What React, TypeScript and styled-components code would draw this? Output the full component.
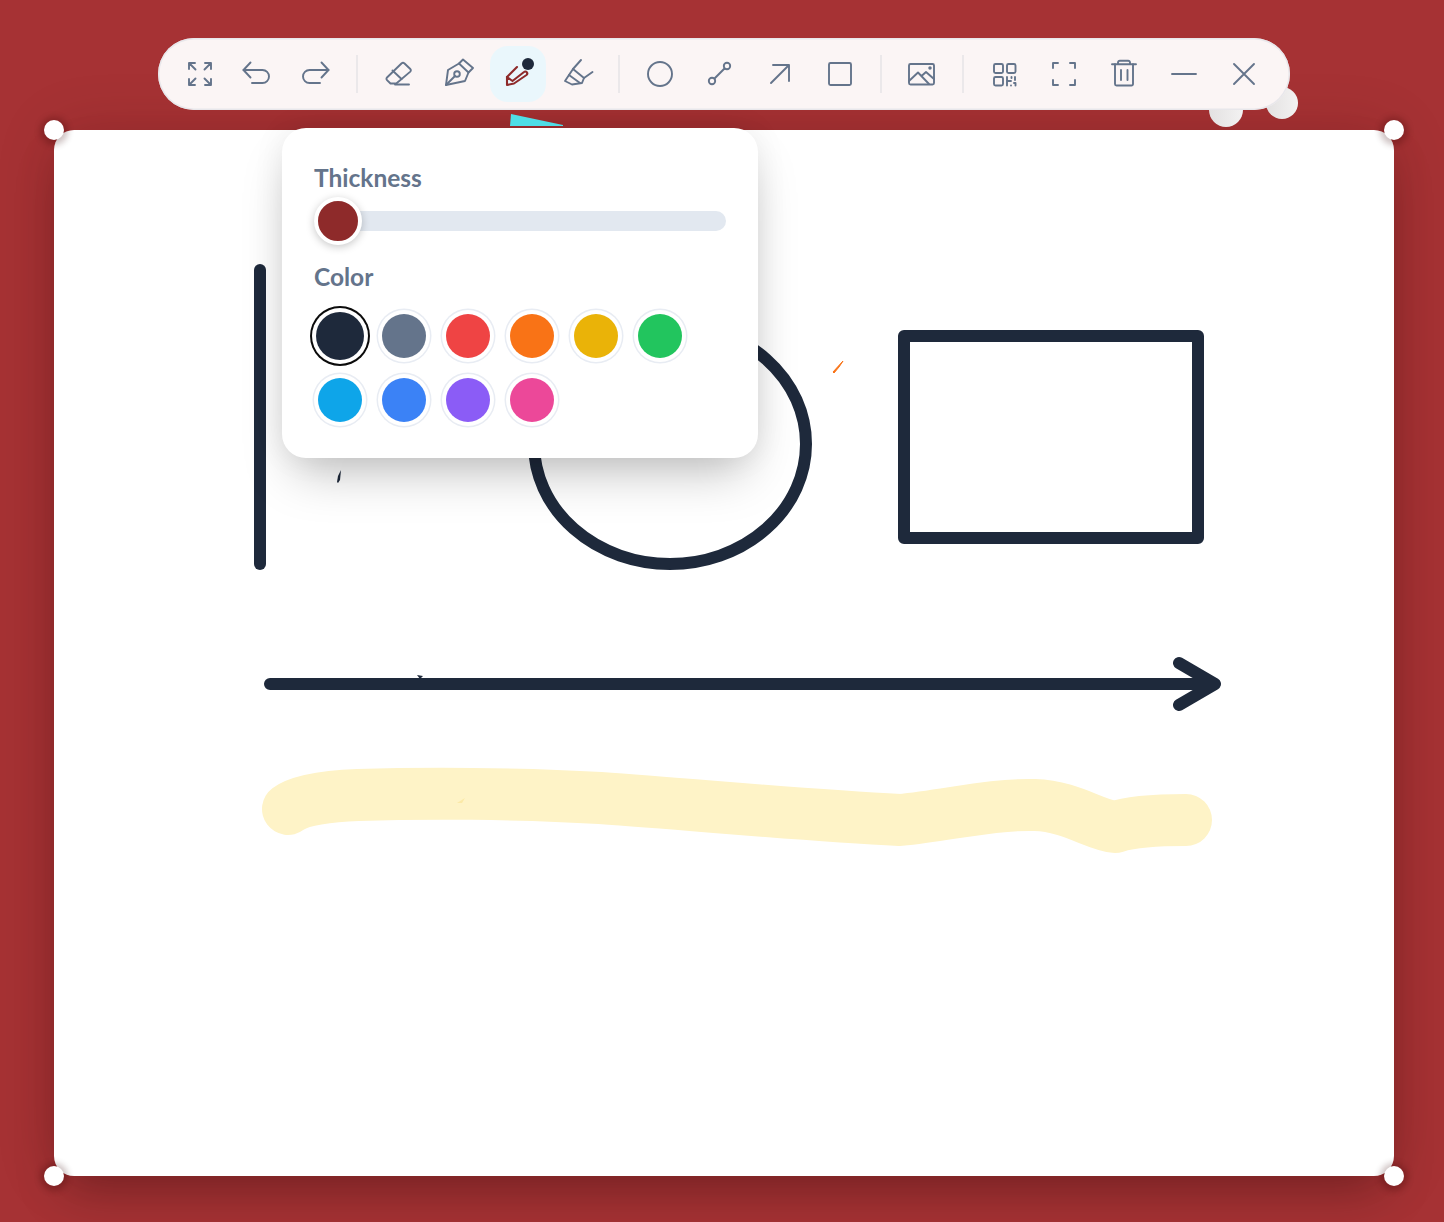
import React from 'react';
import styled, { createGlobalStyle } from 'styled-components';

const GlobalStyle = createGlobalStyle`
  html,
  body {
    margin: 0;
    padding: 0;
    background: #a63234;
    font-family: Lato, 'Open Sans', sans-serif;
  }
`;

const Page = styled.div`
  width: 1444px;
  height: 1222px;
  box-sizing: border-box;
  padding-top: 38px;
  overflow: hidden;
  background: #a63234;
`;

const ToolbarWrap = styled.div`
  position: relative;
  z-index: 3;
  isolation: isolate;
  width: 1132px;
  margin-left: 158px;
`;

const Toolbar = styled.div`
  display: flex;
  align-items: center;
  box-sizing: border-box;
  height: 72px;
  padding: 0 16px;
  border-radius: 36px;
  background: #fbf5f5;
  box-shadow: inset 0 0 0 1.5px rgba(228, 228, 232, 0.8);
`;

const Blob = styled.div<{ $x: number; $y: number; $size: number }>`
  position: absolute;
  z-index: -1;
  left: ${p => p.$x}px;
  top: ${p => p.$y}px;
  width: ${p => p.$size}px;
  height: ${p => p.$size}px;
  border-radius: 50%;
  background: linear-gradient(90deg, #e3e1e1, #f3f2f2);
`;

const CyanTip = styled.svg`
  position: absolute;
  z-index: -1;
  left: 352px;
  top: 76px;
`;

const ToolCell = styled.div<{ $narrow?: boolean }>`
  display: flex;
  flex: none;
  align-items: center;
  justify-content: center;
  width: ${p => (p.$narrow ? 52 : 60)}px;
  height: 72px;
`;

const ToolFace = styled.div<{ $active?: boolean }>`
  position: relative;
  display: flex;
  align-items: center;
  justify-content: center;
  width: 56px;
  height: 56px;
  border-radius: 18px;
  color: ${p => (p.$active ? '#8e2a2a' : '#64748b')};
  background: ${p => (p.$active ? '#eaf7fc' : 'transparent')};
`;

const ColorDot = styled.span`
  position: absolute;
  top: 12px;
  right: 12px;
  width: 12px;
  height: 12px;
  border-radius: 50%;
  background: #1e293b;
`;

const Divider = styled.div`
  flex: none;
  width: 2px;
  height: 38px;
  margin: 0 10px;
  background: #ebe8ea;
`;

const Board = styled.div`
  position: relative;
  width: 1340px;
  height: 1046px;
  margin: 20px 0 0 54px;
  border-radius: 20px;
  background: #ffffff;
  box-shadow: 0 25px 50px -12px rgba(0, 0, 0, 0.25), 0 0 60px rgba(60, 0, 0, 0.16);
`;

const Handle = styled.div<{ $right?: boolean; $bottom?: boolean }>`
  position: absolute;
  ${p => (p.$right ? 'right' : 'left')}: -10px;
  ${p => (p.$bottom ? 'bottom' : 'top')}: -10px;
  width: 20px;
  height: 20px;
  border-radius: 50%;
  background: #ffffff;
  box-shadow: 0 1px 6px 4px rgba(50, 0, 0, 0.24);
`;

const Drawing = styled.svg`
  display: block;
  border-radius: 20px;
`;

const Popover = styled.div`
  position: absolute;
  left: 228px;
  top: -2px;
  box-sizing: border-box;
  width: 476px;
  height: 330px;
  padding: 32px;
  border-radius: 24px;
  background: #ffffff;
  box-shadow: 0 25px 50px -12px rgba(0, 0, 0, 0.25), 0 0 32px rgba(0, 0, 0, 0.07);
`;

const Label = styled.div`
  height: 36px;
  color: #64748b;
  font-size: 24.5px;
  font-weight: 700;
  line-height: 36px;
`;

const Slider = styled.div`
  position: relative;
  display: flex;
  align-items: center;
  height: 48px;
  margin: 1px 0 14px;
`;

const Track = styled.div`
  width: 100%;
  height: 20px;
  border-radius: 10px;
  background: #e2e8f0;
`;

const Thumb = styled.div`
  position: absolute;
  left: 0;
  top: 0;
  box-sizing: border-box;
  width: 48px;
  height: 48px;
  border: 4px solid #ffffff;
  border-radius: 50%;
  background: #8e2a2a;
  box-shadow: 0 2px 8px rgba(0, 0, 0, 0.22);
`;

const Swatches = styled.div`
  display: grid;
  grid-template-columns: repeat(6, 54px);
  grid-auto-rows: 54px;
  gap: 10px;
  margin: 14px 0 0 -1px;
`;

const Swatch = styled.div<{ $color: string; $selected?: boolean }>`
  box-sizing: border-box;
  width: ${p => (p.$selected ? 48 : 44)}px;
  height: ${p => (p.$selected ? 48 : 44)}px;
  margin: ${p => (p.$selected ? 3 : 5)}px;
  border-radius: 50%;
  background: ${p => p.$color};
  box-shadow: ${p =>
    p.$selected
      ? '0 0 0 4px #ffffff, 0 0 0 6px #0b0b0b'
      : '0 0 0 4px #ffffff, 0 0 0 5.5px #e8ecf3'};
`;

const Icon = ({ children, width = 1.9 }: { children: React.ReactNode; width?: number }) => (
  <svg
    width={32}
    height={32}
    viewBox="0 0 32 32"
    fill="none"
    stroke="currentColor"
    strokeWidth={width}
    strokeLinecap="round"
    strokeLinejoin="round"
  >
    {children}
  </svg>
);

const swatchColors = [
  '#1e293b',
  '#64748b',
  '#ef4444',
  '#f97316',
  '#eab308',
  '#22c55e',
  '#0ea5e9',
  '#3b82f6',
  '#8b5cf6',
  '#ec4899',
];

const Undo = (
  <>
    <path d="M10.5 4.5 3.5 12l7 7.5" />
    <path d="M3.5 12h19a6.5 6.5 0 0 1 0 13H12" />
  </>
);

export default function App() {
  return (
    <Page>
      <GlobalStyle />
      <ToolbarWrap>
        <Blob $x={1051} $y={55} $size={34} />
        <Blob $x={1108} $y={49} $size={32} />
        <CyanTip width={54} height={12} viewBox="0 0 54 12">
          <path d="M1 0 53 11v1H0z" fill="#4fdde6" />
        </CyanTip>
        <Toolbar>
          <ToolCell $narrow>
            <ToolFace>
              <Icon>
                <path d="M5 11V5h6M5 5l6.5 6.5M21 5h6v6M27 5l-6.5 6.5M5 21v6h6M5 27l6.5-6.5M27 21v6h-6M27 27l-6.5-6.5" />
              </Icon>
            </ToolFace>
          </ToolCell>
          <ToolCell>
            <ToolFace>
              <Icon>{Undo}</Icon>
            </ToolFace>
          </ToolCell>
          <ToolCell>
            <ToolFace>
              <Icon>
                <g transform="matrix(-1 0 0 1 32 0)">{Undo}</g>
              </Icon>
            </ToolFace>
          </ToolCell>
          <Divider />
          <ToolCell>
            <ToolFace>
              <Icon>
                <path d="M19.7 5.3 5 19.5a1.8 1.8 0 0 0 0 2.6l3.5 3.4h5.8L28.3 13.6a1.8 1.8 0 0 0 0-2.6l-6-5.700a1.8 1.8 0 0 0-2.6 0Z" />
                <path d="m10.5 12.500 9 8.500M13 26.500h14" />
              </Icon>
            </ToolFace>
          </ToolCell>
          <ToolCell>
            <ToolFace>
              <Icon>
                <path d="M21 1.500 31 10l-4.500 4.500L17 5.500Z" />
                <path d="M17 5.500 6 12 4 27l19-4 3.500-8.500" />
                <path d="m4 27 9-9" />
                <circle cx={15} cy={16} r={2.8} />
              </Icon>
            </ToolFace>
          </ToolCell>
          <ToolCell>
            <ToolFace $active>
              <Icon width={2.1}>
                <path d="M5 19 15 9" />
                <path d="M5 19v8l7-1.500 12.500-8.500a1.900 1.900 0 0 0-2.500-3L10.500 23 5 19Z" />
              </Icon>
              <ColorDot />
            </ToolFace>
          </ToolCell>
          <ToolCell>
            <ToolFace>
              <Icon>
                <path d="M19 2 11 11l11 9 8.500-6" />
                <path d="M11 11 3 23l7 3.500 10-1.500 2-5" />
                <path d="m7 17 11 8" />
              </Icon>
            </ToolFace>
          </ToolCell>
          <Divider />
          <ToolCell>
            <ToolFace>
              <Icon>
                <circle cx={16} cy={16} r={12} />
              </Icon>
            </ToolFace>
          </ToolCell>
          <ToolCell>
            <ToolFace>
              <Icon>
                <circle cx={8} cy={23} r={3.2} />
                <circle cx={23} cy={8} r={3.2} />
                <path d="m10.500 20.500 10-10" />
              </Icon>
            </ToolFace>
          </ToolCell>
          <ToolCell>
            <ToolFace>
              <Icon>
                <path d="M7 25 25 7M9 7h16v16" />
              </Icon>
            </ToolFace>
          </ToolCell>
          <ToolCell>
            <ToolFace>
              <Icon>
                <rect x={5} y={5} width={22} height={22} rx={1.5} />
              </Icon>
            </ToolFace>
          </ToolCell>
          <Divider />
          <ToolCell>
            <ToolFace>
              <Icon>
                <rect x={3} y={6} width={25} height={20.5} rx={1.5} />
                <path d="m3 23 9-8.500L23 26M15.500 18l4.500-4 8 7" />
                <circle cx={24} cy={10} r={0.8} />
              </Icon>
            </ToolFace>
          </ToolCell>
          <Divider />
          <ToolCell>
            <ToolFace>
              <Icon>
                <rect x={6} y={6} width={9} height={9} rx={1.5} />
                <rect x={19} y={6} width={8.5} height={9} rx={1.5} />
                <rect x={6} y={19} width={9} height={8.5} rx={1.5} />
                <path d="M19 19v8.500M19 23h4M23.500 19v1M27 19v3M26 25h1.500v2.500M23 27.500h0" />
              </Icon>
            </ToolFace>
          </ToolCell>
          <ToolCell>
            <ToolFace>
              <Icon>
                <path d="M5 10V5h5M22 5h5v5M5 22v5h5M27 22v5h-5" />
              </Icon>
            </ToolFace>
          </ToolCell>
          <ToolCell>
            <ToolFace>
              <Icon>
                <path d="M4 6.300h24M10 6.300V4.500A1.800 1.800 0 0 1 11.800 2.700h8.400A1.800 1.800 0 0 1 22 4.500v1.800" />
                <path d="M7 6.300V26a1.500 1.500 0 0 0 1.500 1.500h15A1.500 1.500 0 0 0 25 26V6.300" />
                <path d="M13 12v10M19.500 12v10" />
              </Icon>
            </ToolFace>
          </ToolCell>
          <ToolCell>
            <ToolFace>
              <Icon>
                <path d="M4 16h24" />
              </Icon>
            </ToolFace>
          </ToolCell>
          <ToolCell>
            <ToolFace>
              <Icon>
                <path d="M6 6l20 20M26 6 6 26" />
              </Icon>
            </ToolFace>
          </ToolCell>
        </Toolbar>
      </ToolbarWrap>
      <Board>
        <Drawing width={1340} height={1046} viewBox="54 130 1340 1046" fill="none">
          <g stroke="#1e293b" strokeWidth={12} strokeLinecap="round" strokeLinejoin="round">
            <path d="M260 270v294" />
            <ellipse cx={670} cy={444} rx={136} ry={120} />
            <rect x={904} y={336} width={294} height={202} />
            <path d="M270 684h945M1179 663l36 21-36 21" />
          </g>
          <path
            d="M288 809C300 800 330 796 358 795C420 793 520 793 600 798C700 805 800 815 900 820C950 815 990 804 1035 805C1070 806 1095 825 1115 827C1130 822 1150 820 1186 820"
            stroke="#fef3c7"
            strokeWidth={52}
            strokeLinecap="round"
            strokeLinejoin="round"
          />
          <path d="m337 482 1-6 3-6-1 10-2 3Z" fill="#1e293b" />
          <path d="m833 372 10-11-4 6-5 6Z" fill="#f97316" stroke="#f97316" />
          <path d="m417 675 6 1-3 3Z" fill="#1e293b" />
          <path d="m457 803 8-5-3 5Z" fill="#fbe9a7" />
        </Drawing>
        <Handle />
        <Handle $right />
        <Handle $bottom />
        <Handle $right $bottom />
        <Popover>
          <Label>Thickness</Label>
          <Slider>
            <Track />
            <Thumb />
          </Slider>
          <Label>Color</Label>
          <Swatches>
            {swatchColors.map((color, i) => (
              <Swatch key={color} $color={color} $selected={i === 0} />
            ))}
          </Swatches>
        </Popover>
      </Board>
    </Page>
  );
}
